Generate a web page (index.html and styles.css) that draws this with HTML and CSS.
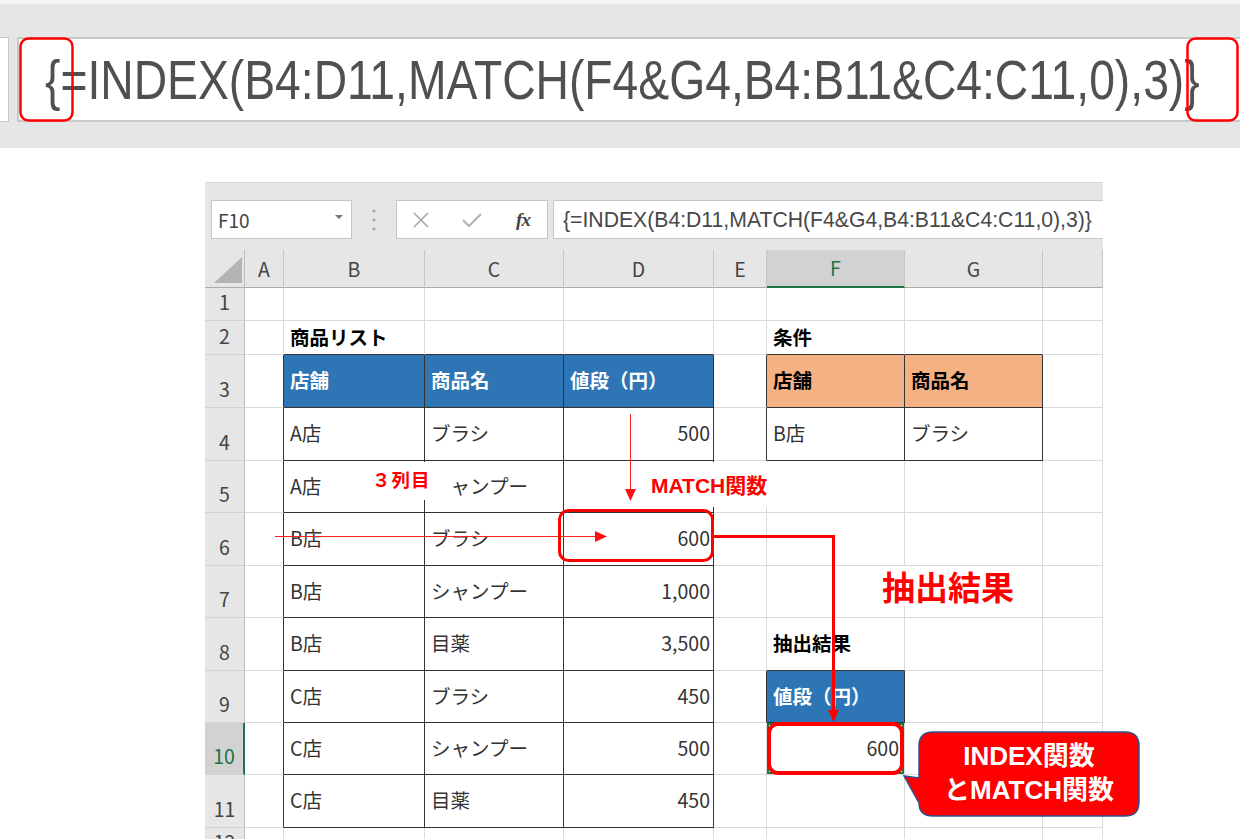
FILE: index.html
```html
<!DOCTYPE html>
<html lang="ja">
<head>
    <meta charset="UTF-8">
    <title>INDEX関数とMATCH関数</title>
    <link rel="stylesheet" href="styles.css">
</head>
<body>
    <!-- 拡大した数式バー -->
    <div class="zoombar">
        <div class="zoom-name"></div>
        <div class="zoom-formula"><span>{=INDEX(B4:D11,MATCH(F4&amp;G4,B4:B11&amp;C4:C11,0),3)}</span></div>
    </div>

    <div class="sheet">
        <div class="fbar">
            <div class="namebox">F10<span class="dd"></span></div>
            <div class="dots">
                <svg width="4" height="24" viewBox="0 0 4 24"><circle cx="2" cy="3" r="1.6"/><circle cx="2" cy="12" r="1.6"/><circle cx="2" cy="21" r="1.6"/></svg>
            </div>
            <div class="fbtns">
                <svg width="16" height="16" viewBox="0 0 16 16"><path d="M1 1 L15 15 M15 1 L1 15" stroke="#a8a8a8" stroke-width="1.6" fill="none"/></svg>
                <svg width="20" height="16" viewBox="0 0 20 16"><path d="M1 8 L7 14 L19 2" stroke="#b4b4b4" stroke-width="2.2" fill="none"/></svg>
                <span class="fx">fx</span>
            </div>
            <div class="finput">{=INDEX(B4:D11,MATCH(F4&amp;G4,B4:B11&amp;C4:C11,0),3)}</div>
        </div>

        <table class="grid">
            <colgroup>
                <col class="w-rh"><col class="w-a"><col class="w-b"><col class="w-c"><col class="w-d"><col class="w-e"><col class="w-f"><col class="w-g"><col class="w-h">
            </colgroup>
            <tr class="hh">
                <th class="corner"><svg width="40" height="37" viewBox="0 0 40 37"><polygon points="9,33 37,33 37,7" fill="#b4b4b4"/></svg></th>
                <th class="ch">A</th><th class="ch">B</th><th class="ch">C</th><th class="ch">D</th><th class="ch">E</th><th class="ch sel">F</th><th class="ch">G</th><th class="ch"></th>
            </tr>
            <tr class="h33">
                <th class="rh">1</th><td></td><td></td><td></td><td></td><td></td><td></td><td></td><td></td>
            </tr>
            <tr class="h34">
                <th class="rh">2</th><td></td><td class="ttl db">商品リスト</td><td class="db"></td><td class="db"></td><td></td><td class="ttl db">条件</td><td class="db"></td><td></td>
            </tr>
            <tr class="h53">
                <th class="rh">3</th><td class="dr"></td><td class="tb hb">店舗</td><td class="tb hb">商品名</td><td class="tb hb">値段（円）</td><td class="dr"></td><td class="tb ho">店舗</td><td class="tb ho">商品名</td><td></td>
            </tr>
            <tr class="h53">
                <th class="rh">4</th><td class="dr"></td><td class="tb">A店</td><td class="tb">ブラシ</td><td class="tb num">500</td><td class="dr"></td><td class="tb">B店</td><td class="tb">ブラシ</td><td></td>
            </tr>
            <tr class="h52">
                <th class="rh">5</th><td class="dr"></td><td class="tb">A店</td><td class="tb">シャンプー</td><td class="tb num"></td><td></td><td></td><td></td><td></td>
            </tr>
            <tr class="h53">
                <th class="rh">6</th><td class="dr"></td><td class="tb">B店</td><td class="tb">ブラシ</td><td class="tb num">600</td><td></td><td></td><td></td><td></td>
            </tr>
            <tr class="h52">
                <th class="rh">7</th><td class="dr"></td><td class="tb">B店</td><td class="tb">シャンプー</td><td class="tb num">1,000</td><td></td><td></td><td></td><td></td>
            </tr>
            <tr class="h53">
                <th class="rh">8</th><td class="dr"></td><td class="tb">B店</td><td class="tb">目薬</td><td class="tb num">3,500</td><td></td><td class="ttl db">抽出結果</td><td></td><td></td>
            </tr>
            <tr class="h52">
                <th class="rh">9</th><td class="dr"></td><td class="tb">C店</td><td class="tb">ブラシ</td><td class="tb num">450</td><td class="dr"></td><td class="tb hb">値段（円）</td><td></td><td></td>
            </tr>
            <tr class="h52">
                <th class="rh sel">10</th><td class="dr"></td><td class="tb">C店</td><td class="tb">シャンプー</td><td class="tb num">500</td><td></td><td class="num cur">600</td><td></td><td></td>
            </tr>
            <tr class="h53">
                <th class="rh">11</th><td class="dr"></td><td class="tb">C店</td><td class="tb">目薬</td><td class="tb num">450</td><td></td><td></td><td></td><td></td>
            </tr>
            <tr class="h33">
                <th class="rh">12</th><td></td><td></td><td></td><td></td><td></td><td></td><td></td><td></td>
            </tr>
        </table>
    </div>

    <!-- 注釈 -->
    <svg class="marks" width="1240" height="839" viewBox="0 0 1240 839">
        <rect x="20.5" y="38.5" width="52" height="82" rx="8" fill="none" stroke="#ff0000" stroke-width="2.5"/>
        <rect x="1187.5" y="38.5" width="50" height="82" rx="8" fill="none" stroke="#ff0000" stroke-width="2.5"/>
        <line x1="630.5" y1="414" x2="630.5" y2="492" stroke="#ff2020" stroke-width="1"/>
        <polygon points="625,489 636,489 630.5,501" fill="#ff1010"/>
        <line x1="275" y1="536.5" x2="597" y2="536.5" stroke="#ff2020" stroke-width="1"/>
        <polygon points="595,531 607,536.5 595,542" fill="#ff1010"/>
        <rect x="559.5" y="510.5" width="153" height="50" rx="9" fill="none" stroke="#ff0000" stroke-width="3"/>
        <polyline points="713,536.5 833.5,536.5 833.5,712" fill="none" stroke="#ff0000" stroke-width="3"/>
        <polygon points="828,710 839,710 833.5,722" fill="#ff0000"/>
        <rect x="769" y="724" width="133" height="49" rx="9" fill="none" stroke="#ff0000" stroke-width="4"/>
        <path d="M933 732 H1125 Q1139 732 1139 746 V802 Q1139 816 1125 816 H933 Q919 816 919 803 L904 776 L919 778 V746 Q919 732 933 732 Z" fill="#ff0000" stroke="#2f528f" stroke-width="1.5"/>
    </svg>
    <div class="lbl lbl-col">３列目</div>
    <div class="lbl lbl-match">MATCH関数</div>
    <div class="lbl lbl-result">抽出結果</div>
    <div class="callout">INDEX関数<br>とMATCH関数</div>
</body>
</html>
```

FILE: styles.css
```css
body {margin:0; background:#fff; font-family:"Noto Sans CJK JP", sans-serif; overflow:hidden; position:relative; height:839px;}

/* 拡大バー */
.zoombar {height:148px; box-sizing:border-box; border-top:4px solid #f4f4f4; background:#e6e6e6; padding-top:33px; display:flex; gap:8px;}
.zoom-name {width:9px; height:85px; box-sizing:border-box; background:#fff; border:1px solid #c6c6c6; border-left:none;}
.zoom-formula {flex:1; height:85px; box-sizing:border-box; background:#fff; border:2px solid #c8c8c8; border-right:none; padding-left:26px; font:56px/81px "Liberation Sans", sans-serif; color:#505050; white-space:nowrap; overflow:hidden;}
.zoom-formula span {display:inline-block; transform:scaleX(0.826); transform-origin:left center;}

/* シート */
.sheet {width:898px; margin:34px 0 0 205px; overflow:hidden;}
.fbar {height:68px; box-sizing:border-box; background:#e6e6e6; border-top:1px solid #d8d8d8; display:flex; align-items:flex-start; padding:17px 0 0 6px;}
.namebox {width:141px; height:39px; box-sizing:border-box; background:#fff; border:1px solid #c6c6c6; display:flex; align-items:center; justify-content:space-between; padding:0 8px 0 6px; font-size:19px; color:#444;}
.dd {width:0; height:0; border-left:4px solid transparent; border-right:4px solid transparent; border-top:4px solid #777; margin-top:-6px;}
.dots {width:44px; height:39px; display:flex; align-items:center; justify-content:center;}
.dots svg {fill:#a6a6a6;}
.fbtns {width:152px; height:39px; box-sizing:border-box; background:#fff; border:1px solid #c6c6c6; display:grid; grid-template-columns:48px 54px 48px; align-items:center; justify-items:center;}
.fx {font:italic bold 19px "Liberation Serif", serif; color:#444; letter-spacing:-1px;}
.finput {flex:1; margin-left:5px; height:39px; box-sizing:border-box; background:#fff; border:1px solid #c6c6c6; border-right:none; padding-left:9px; font:21.2px/37px "Liberation Sans", sans-serif; color:#484848; white-space:nowrap;}

.grid {table-layout:fixed; width:898px; border-collapse:separate; border-spacing:0;}
.w-rh {width:40px;} .w-a {width:39px;} .w-b {width:141px;} .w-c {width:139px;} .w-d {width:150px;}
.w-e {width:53px;} .w-f {width:138px;} .w-g {width:138px;} .w-h {width:60px;}
.grid th, .grid td {box-sizing:border-box; padding:0; font-size:19.5px; line-height:24px; white-space:nowrap; overflow:hidden;}
.hh > * {height:37px;}
.h33 > * {height:33px;}
.h34 > * {height:34px;}
.h52 > * {height:52px;}
.h53 > * {height:53px;}

.corner {background:#e6e6e6; border-right:1px solid #bcbcbc; border-bottom:1px solid #ababab;}
.corner svg {display:block;}
.ch {background:#e6e6e6; border-right:1px solid #c6c6c6; border-bottom:1px solid #ababab; font-weight:400; color:#444; text-align:center;}
.ch.sel {background:#d2d2d2; color:#217346; border-bottom:2px solid #217346;}
.rh {background:#e6e6e6; border-right:1px solid #bcbcbc; border-bottom:1px solid #d2d2d2; font-weight:400; color:#444; text-align:center; vertical-align:bottom; padding-bottom:6px !important;}
.rh.sel {background:#d2d2d2; color:#217346; border-right:2px solid #217346;}

.grid td {border-right:1px solid #dadada; border-bottom:1px solid #dadada; padding:0 6px 2px; color:#333; vertical-align:middle;}
.grid td.dr {border-right-color:#333;}
.grid td.db {border-bottom-color:#333;}
.grid td.tb {border-right-color:#333; border-bottom-color:#333;}
.grid td.hb {background:#2e75b6; color:#fff; font-weight:700;}
.grid td.ho {background:#f4b183; color:#000; font-weight:700;}
.grid td.ttl {font-weight:700; color:#000;}
.grid td.num {text-align:right; padding-right:3px;}
.grid td.cur {box-shadow:inset 0 0 0 2px #217346; padding-right:5px;}

/* 注釈 */
.marks {position:absolute; left:0; top:0;}
.lbl {position:absolute; background:#fff; color:#ff0000; font-weight:700; font-family:"Liberation Sans", "Noto Sans CJK JP", sans-serif; white-space:nowrap;}
.lbl-col {left:362px; top:462px; width:78px; height:38px; padding-left:10px; font-size:18.5px; line-height:38px; letter-spacing:1px;}
.lbl-match {left:643px; top:462px; width:132px; height:45px; padding-left:8px; font-size:21px; line-height:47px;}
.lbl-result {left:878px; top:566px; padding:0 4px; font-size:33px; line-height:40px; font-family:"Noto Sans CJK JP", sans-serif;}
.callout {position:absolute; left:919px; top:731px; width:220px; height:84px; display:flex; flex-direction:column; justify-content:center; align-items:center; text-align:center; color:#fff; font:700 26px/34px "Liberation Sans", "Noto Sans CJK JP", sans-serif;}
```
